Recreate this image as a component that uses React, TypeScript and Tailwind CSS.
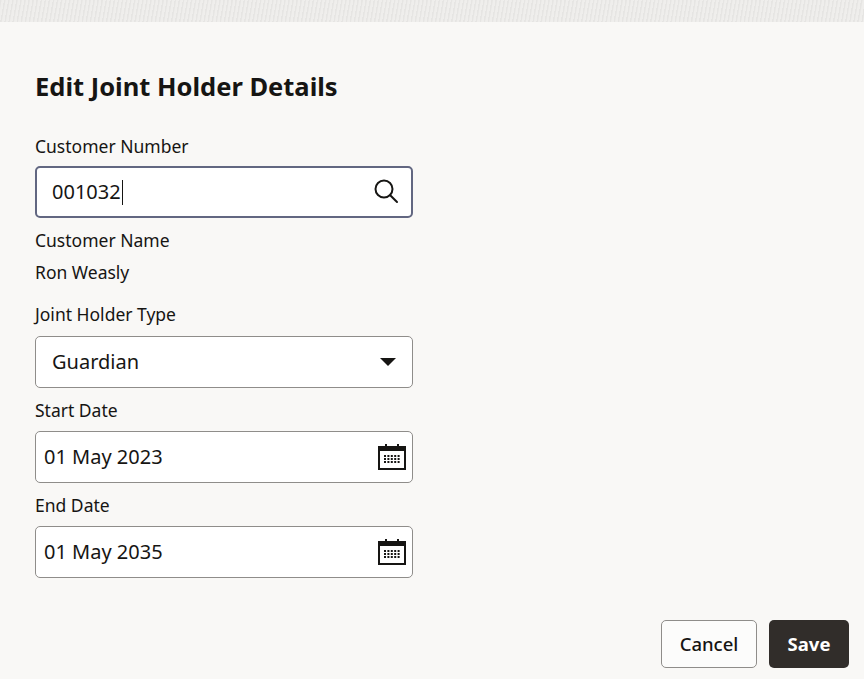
const font = { fontFamily: '"Noto Sans", "Open Sans", sans-serif' };

const SearchIcon = () => (
  <svg width="28" height="28" viewBox="0 0 28 28" fill="none" stroke="#161513" strokeWidth="2" strokeLinecap="round">
    <circle cx="12" cy="11" r="8.5" />
    <path d="M18.2 17.2 L25 24" />
  </svg>
);

const CalendarIcon = () => {
  const dots = [];
  for (let r = 0; r < 3; r++) {
    for (let c = 0; c < 5; c++) {
      dots.push(<rect key={`${r}-${c}`} x={7 + c * 3.4} y={13 + r * 3} width="2" height="2" fill="#161513" />);
    }
  }
  return (
    <svg width="30" height="30" viewBox="0 0 30 30" fill="none">
      <rect x="2" y="5" width="26" height="22" stroke="#161513" strokeWidth="2" fill="#fff" />
      <rect x="2" y="5" width="26" height="4" fill="#161513" />
      <rect x="8" y="2" width="2" height="6" fill="#161513" />
      <rect x="20" y="2" width="2" height="6" fill="#161513" />
      {dots}
    </svg>
  );
};

const Label = ({ children, className = "" }: { children: React.ReactNode; className?: string }) => (
  <div className={`text-[17.5px] leading-6 text-[#161513] ${className}`}>{children}</div>
);

const DateField = ({ value }: { value: string }) => (
  <div className="flex h-[52px] w-[378px] items-center justify-between rounded-[5px] border border-[#8f8d8a] bg-white pl-[8px] pr-[5px]">
    <span className="text-[20px] text-[#161513]">{value}</span>
    <CalendarIcon />
  </div>
);

export default function App() {
  return (
    <div style={font} className="flex h-[679px] w-[864px] flex-col overflow-hidden bg-[#f9f8f6]">
      <div className="h-[22px] shrink-0 bg-[#ebeae8] bg-[repeating-linear-gradient(100deg,#e6e5e3_0px,#e6e5e3_1px,#efeeec_2px,#efeeec_4px)]" />

      <div className="flex flex-1 flex-col px-[35px]">
        <h1 className="mt-[48px] text-[25.5px] font-bold leading-8 text-[#161513]">Edit Joint Holder Details</h1>

        <Label className="mt-[32px]">Customer Number</Label>
        <div className="mt-[8px] flex h-[52px] w-[378px] items-center justify-between rounded-[5px] border-2 border-[#626781] bg-white pl-[15px] pr-[11px]">
          <span className="flex items-center text-[20px] text-[#161513]">
            001032
            <span className="ml-[1px] inline-block h-[25px] w-[1px] bg-[#161513]" />
          </span>
          <SearchIcon />
        </div>

        <Label className="mt-[10px]">Customer Name</Label>
        <Label className="mt-[8px]">Ron Weasly</Label>

        <Label className="mt-[18px]">Joint Holder Type</Label>
        <div className="mt-[10px] flex h-[52px] w-[378px] items-center justify-between rounded-[5px] border border-[#8f8d8a] bg-white pl-[16px] pr-[15px]">
          <span className="text-[20px] text-[#161513]">Guardian</span>
          <svg width="18" height="10" viewBox="0 0 18 10">
            <path d="M1 1 L17 1 L9 9 Z" fill="#161513" />
          </svg>
        </div>

        <Label className="mt-[10px]">Start Date</Label>
        <div className="mt-[9px]">
          <DateField value="01 May 2023" />
        </div>

        <Label className="mt-[10px]">End Date</Label>
        <div className="mt-[9px]">
          <DateField value="01 May 2035" />
        </div>

        <div className="-mr-[20px] mt-[42px] flex justify-end gap-[12px]">
          <button className="h-[48px] w-[96px] rounded-[5px] border border-[#8f8d8a] bg-[#fcfcfb] text-[18.5px] font-medium text-[#161513]">
            Cancel
          </button>
          <button className="h-[48px] w-[80px] rounded-[5px] bg-[#312d2a] text-[18.5px] font-bold text-white">
            Save
          </button>
        </div>
      </div>
    </div>
  );
}
